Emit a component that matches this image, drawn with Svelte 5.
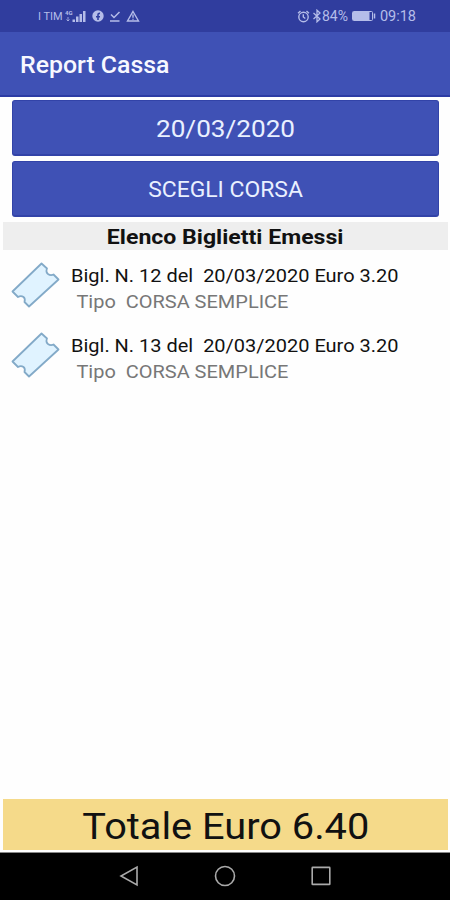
<script lang="ts">
	type Ticket = { number: number; date: string; price: string; kind: string };

	const date = '20/03/2020';
	const tickets: Ticket[] = [
		{ number: 12, date, price: '3.20', kind: 'CORSA SEMPLICE' },
		{ number: 13, date, price: '3.20', kind: 'CORSA SEMPLICE' }
	];
	const total = '6.40';
</script>

<div class="screen">
	<div class="status">
		<div class="status-left">
			<span class="carrier">I TIM</span>
			<svg class="signal" width="22" height="14" viewBox="0 0 22 14">
				<text x="0" y="6">4G</text>
				<path d="M3 8v4M1.500 10.500 3 12l1.500-1.500" fill="none" stroke="currentColor" stroke-width=".8" />
				<path d="M7.500 13v-2.500h2.500V13zM11 13V7.500h2.500V13zM14.500 13V5H17v8zM18 13V2h2.500v11z" fill="currentColor" />
			</svg>
			<svg class="face" width="12" height="12" viewBox="0 0 12 12">
				<circle cx="6" cy="6" r="5.700" fill="currentColor" />
				<path d="M6 10V5q0-1.800 2-1.600M4 6.700h4" fill="none" stroke="#303f9f" stroke-width="1.600" />
			</svg>
			<svg class="check" width="12" height="12" viewBox="0 0 12 12" fill="none" stroke="currentColor" stroke-width="1.500">
				<path d="m2 4.500 3 3L10.500 2M1 11h9.500" />
			</svg>
			<svg class="warn" width="14" height="12" viewBox="0 0 14 12" fill="none" stroke="currentColor" stroke-width="1.400">
				<path d="M7 1.500 12.500 11h-11zM7 4.500v3.200M7 8.700v1.100" />
			</svg>
		</div>
		<div class="status-right">
			<svg width="13" height="13" viewBox="0 0 13 13" fill="none" stroke="currentColor" stroke-width="1.400">
				<circle cx="6.500" cy="7" r="4.700" />
				<path d="M1 3.200 3.500 1M12 3.200 9.500 1M6.300 4.300V7l2 1.500" />
			</svg>
			<svg class="bluetooth" width="10" height="14" viewBox="0 0 10 14" fill="none" stroke="currentColor" stroke-width="1.300">
				<path d="m1.500 4 6.500 6-3 2.800V1.200L8 4l-6.500 6" />
			</svg>
			<span class="percent">84%</span>
			<svg class="battery" width="25" height="10" viewBox="0 0 25 10">
				<rect x=".5" y=".5" width="20" height="9" rx="1" fill="none" stroke="currentColor" />
				<rect x="1" y="1" width="16.500" height="8" fill="currentColor" />
				<path d="M22.500 2.500v5" stroke="currentColor" stroke-width="1.500" />
			</svg>
			<span class="clock">09:18</span>
		</div>
	</div>

	<header><h1>Report Cassa</h1></header>

	<main>
		<div class="actions">
			<button class="date"><span>{date}</span></button>
			<button class="ride"><span>SCEGLI CORSA</span></button>
		</div>
		<h2><span>Elenco Biglietti Emessi</span></h2>
		<ul>
			{#each tickets as t (t.number)}
				<li>
					<svg class="ticket" width="50" height="48" viewBox="0 0 50 48">
						<path
							d="M31.500 2.500 37 7.500q-1.500 3.500 1 5.500 2.500 1.800 5.500.5l5 5L19 45.500l-4.500-4.500q1-3.500-1-5-2.500-1.800-5.500 0l-5.500-5.500z"
							fill="#e0f3ff"
							stroke="#83aac8"
							stroke-width="1.800"
							stroke-linejoin="round"
						/>
					</svg>
					<div class="info">
						<p class="title">Bigl. N. {t.number} del&nbsp; {t.date} Euro {t.price}</p>
						<p class="kind">Tipo&nbsp; {t.kind}</p>
					</div>
				</li>
			{/each}
		</ul>
		<div class="total"><span>Totale Euro {total}</span></div>
	</main>

	<nav>
		<svg width="20" height="22" viewBox="0 0 20 22"><path d="M18 2v18L2 11z" /></svg>
		<svg width="22" height="22" viewBox="0 0 22 22"><circle cx="11" cy="11" r="9.500" /></svg>
		<svg width="20" height="22" viewBox="0 0 20 22"><rect x="1.200" y="2.400" width="17.600" height="17" rx=".5" /></svg>
	</nav>
</div>

<style>
	:global(body) {
		margin: 0;
	}
	.screen {
		display: flex;
		flex-direction: column;
		width: 450px;
		height: 900px;
		overflow: hidden;
		background: #fefefe;
		color: #111;
		font-family: Roboto, sans-serif;
	}
	svg {
		display: block;
		flex: none;
	}
	h1,
	h2,
	p,
	ul {
		margin: 0;
		padding: 0;
	}
	/* wide text: the glyphs are a little broader than Roboto's own */
	h1,
	p,
	button span,
	h2 span,
	.total span {
		display: block;
		white-space: pre;
		transform: scaleX(1.08);
	}
	h1,
	p {
		transform-origin: left;
	}

	.status {
		box-sizing: border-box;
		display: flex;
		justify-content: space-between;
		height: 32px;
		padding: 0 34px 0 38px;
		background: #303d9e;
		color: #b5bde9;
	}
	.status-left,
	.status-right {
		display: flex;
		align-items: center;
	}
	.carrier {
		width: 27px;
		font-size: 11px;
		white-space: nowrap;
	}
	.signal text {
		font-size: 6px;
		font-weight: 700;
		fill: currentColor;
	}
	.face {
		margin-left: 5px;
	}
	.check {
		margin-left: 5px;
	}
	.warn {
		margin-left: 5px;
	}
	.bluetooth {
		margin-left: 2px;
	}
	.percent {
		width: 30px;
		font-size: 14px;
	}
	.battery {
		width: 25px;
	}
	.clock {
		margin-left: 3px;
		font-size: 14.5px;
	}

	header {
		box-sizing: border-box;
		display: flex;
		align-items: center;
		height: 65px;
		padding: 5px 0 0 20px;
		border-bottom: 2px solid #2c3ba4;
		background: #3f51b5;
	}
	h1 {
		color: #f7f8ff;
		font-size: 23px;
		font-weight: 500;
		line-height: 28px;
	}

	main {
		display: flex;
		flex: 1;
		flex-direction: column;
	}
	.actions {
		display: flex;
		flex-direction: column;
		gap: 5px;
		padding: 3px 11px 0 12px;
	}
	button {
		box-sizing: border-box;
		height: 56px;
		padding: 3px 0 0;
		border: 1px solid #3243a8;
		border-bottom-width: 2px;
		border-radius: 3px;
		background: #3f51b5;
		color: #e9f0ff;
		font-family: inherit;
	}
	.date {
		font-size: 24.2px;
	}
	.ride {
		padding-top: 1px;
		font-size: 21.5px;
	}
	.ride span {
		transform: scaleX(1.065);
	}
	h2 {
		display: flex;
		justify-content: center;
		height: 28px;
		margin: 5px 2px 0 3px;
		background: #eee;
		font-size: 20.5px;
		font-weight: 700;
		line-height: 30px;
	}
	h2 span {
		transform: scaleX(1.125);
	}
	ul {
		flex: 1;
		padding-top: 11px;
		list-style: none;
	}
	li {
		display: flex;
		height: 70px;
		padding-left: 10px;
	}
	.info {
		margin-left: 11px;
	}
	p {
		height: 26px;
		font-size: 18.5px;
		line-height: 30px;
	}
	.kind {
		padding-left: 5px;
		color: #777;
	}
	.total {
		display: flex;
		justify-content: center;
		height: 51px;
		margin: 0 2px 2px 3px;
		background: #f5da8a;
		font-size: 36.8px;
		line-height: 56px;
	}

	nav {
		box-sizing: border-box;
		display: flex;
		align-items: center;
		justify-content: center;
		gap: 75px;
		height: 48px;
		padding-bottom: 2px;
		border-top: 1px solid #888;
		background: #000;
	}
	nav svg {
		fill: none;
		stroke: #aaa;
		stroke-width: 1.6;
	}
</style>
